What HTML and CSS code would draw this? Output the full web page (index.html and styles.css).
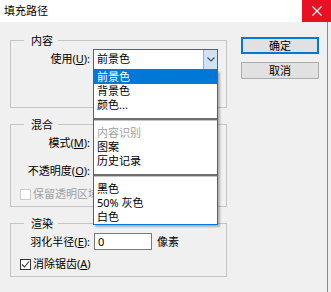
FILE: index.html
```html
<!DOCTYPE html>
<html lang="zh-CN">
<head>
<meta charset="utf-8">
<title>填充路径</title>
<link rel="stylesheet" href="styles.css">
</head>
<body>
<div class="window">
  <div class="titlebar">
    <span class="title">填充路径</span>
    <span class="close"><svg width="10" height="10" viewBox="0 0 10 10"><path d="M0.5 0.5L9.5 9.5M9.5 0.5L0.5 9.5" stroke="#fff" stroke-width="1.1" fill="none"/></svg></span>
  </div>
  <div class="body">
    <div class="groups">
      <fieldset class="group g1">
        <legend>内容</legend>
        <div class="row">
          <span class="lbl">使用(<u>U</u>):</span>
          <div class="select focused">
            <span class="val">前景色</span>
            <span class="arrow"><svg width="8" height="5" viewBox="0 0 8 5"><path d="M0.5 0.5L4 4L7.5 0.5" stroke="#4a4a4a" stroke-width="1.1" fill="none"/></svg></span>
          </div>
        </div>
      </fieldset>
      <fieldset class="group g2">
        <legend>混合</legend>
        <div class="row">
          <span class="lbl">模式(<u>M</u>):</span>
          <div class="select"></div>
        </div>
        <div class="row r2">
          <span class="lbl">不透明度(<u>O</u>):</span>
          <div class="input short"></div>
        </div>
        <div class="check-row disabled r3">
          <span class="box"></span>
          <span class="ctext">保留透明区域</span>
        </div>
      </fieldset>
      <fieldset class="group g3">
        <legend>渲染</legend>
        <div class="row feather">
          <span class="lbl">羽化半径(<u>E</u>):</span>
          <div class="input">0</div>
          <span class="unit">像素</span>
        </div>
        <div class="check-row r4">
          <span class="box checked"><svg width="9" height="9" viewBox="0 0 9 9"><path d="M1 4.5L3.5 7L8 1.5" stroke="#333" stroke-width="1.1" fill="none"/></svg></span>
          <span class="ctext">消除锯齿(<u>A</u>)</span>
        </div>
      </fieldset>
    </div>
    <div class="buttons">
      <button class="btn default">确定</button>
      <button class="btn">取消</button>
    </div>
  </div>
  <ul class="dropdown">
    <li class="item selected">前景色</li>
    <li class="item">背景色</li>
    <li class="item">颜色...</li>
    <li class="sep"><span></span></li>
    <li class="item off">内容识别</li>
    <li class="item">图案</li>
    <li class="item">历史记录</li>
    <li class="sep"><span></span></li>
    <li class="item">黑色</li>
    <li class="item">50% 灰色</li>
    <li class="item">白色</li>
  </ul>
</div>
</body>
</html>
```

FILE: styles.css
```css
* { box-sizing: border-box; }
html, body { margin: 0; padding: 0; background: #f0f0f0; }
body {
  font-family: "Noto Sans", "Noto Sans CJK SC", sans-serif;
  font-size: 11px;
  color: #000;
}
.window {
  position: relative;
  width: 331px;
  height: 292px;
  background: #f0f0f0;
  display: flex;
  flex-direction: column;
  overflow: hidden;
}
.titlebar {
  height: 22px;
  background: #fff;
  display: flex;
  align-items: center;
  justify-content: space-between;
  flex: none;
}
.title { padding-left: 4px; line-height: 22px; }
.close {
  width: 29px;
  height: 22px;
  background: #e81123;
  display: flex;
  align-items: center;
  justify-content: center;
}
.body {
  flex: 1;
  display: flex;
  margin-right: 3px;
  border-right: 1px solid #8a8a8a;
}
.groups {
  padding-left: 10px;
  width: 227px;
  flex: none;
}
.group {
  margin: 8px 0 0 0;
  padding: 0;
  border: 1px solid #c4c4c4;
  min-width: 0;
  width: 217px;
}
.group legend {
  margin-left: 13px;
  padding: 0 5px 0 7px;
  line-height: 17px;
  font-size: 11px;
}
.g1 { margin-top: 10px; padding-bottom: 38px; }
.g2 { padding-bottom: 5px; }
.g3 { padding-top: 1px; padding-bottom: 6px; }

.row {
  display: flex;
  align-items: center;
  height: 20px;
}
.r2 { margin-top: 8px; }
.lbl {
  width: 79px;
  text-align: right;
  margin-right: 3px;
  white-space: nowrap;
  line-height: 14px;
}
.select {
  width: 125px;
  height: 21px;
  border: 1px solid #adadad;
  background: #fff;
  display: flex;
  align-items: center;
  justify-content: space-between;
}
.select.focused { border-color: #0078d7; }
.select .val { padding-left: 3px; line-height: 14px; }
.arrow {
  width: 14px;
  height: 19px;
  background: #cce4f7;
  border-left: 1px solid #7eb4ea;
  display: flex;
  align-items: center;
  justify-content: center;
}
.input {
  width: 58px;
  height: 17px;
  border: 1px solid #7a7a7a;
  background: #fff;
  padding-left: 3px;
  line-height: 15px;
}
.input.short { width: 40px; }
.feather { height: 17px; }
.feather .lbl { margin-right: 4px; }
.unit { margin-left: 5px; line-height: 14px; }

.check-row {
  display: flex;
  align-items: center;
  padding-left: 9px;
}
.r3 { margin-top: 6px; height: 14px; }
.r4 { margin-top: 8px; height: 12px; }
.box {
  width: 11px;
  height: 11px;
  border: 1px solid #333;
  background: #fff;
  margin-right: 2px;
  display: flex;
  align-items: center;
  justify-content: center;
  flex: none;
}
.disabled .box { border-color: #cccccc; background: #fff; }
.disabled .ctext { color: #a0a0a0; }
.ctext { line-height: 14px; white-space: nowrap; }

.buttons {
  margin-left: 14px;
  padding-top: 15px;
  display: flex;
  flex-direction: column;
  gap: 8px;
}
.btn {
  width: 78px;
  height: 17px;
  margin: 0;
  padding: 0;
  font: inherit;
  line-height: 15px;
  color: #000;
  background: #e1e1e1;
  border: 1px solid #adadad;
}
.btn.default {
  border-color: #0078d7;
  box-shadow: inset 0 0 0 1px #0078d7;
}

.dropdown {
  position: absolute;
  left: 93px;
  top: 70px;
  width: 125px;
  margin: 0;
  padding: 0;
  list-style: none;
  background: #fff;
  border: 1px solid #0078d7;
  border-top: none;
  box-shadow: 2px 2px 2px rgba(0, 0, 0, 0.28);
}
.item {
  height: 14px;
  line-height: 14px;
  padding-left: 3px;
  white-space: nowrap;
}
.item.selected { background: #0078d7; color: #fff; }
.item.off { color: #a0a0a0; }
.sep {
  height: 14px;
  display: flex;
  align-items: center;
}
.sep span {
  display: block;
  width: 100%;
  height: 3px;
  background: linear-gradient(#6e6e6e 0 2px, #c4c4c4 2px);
}
```
